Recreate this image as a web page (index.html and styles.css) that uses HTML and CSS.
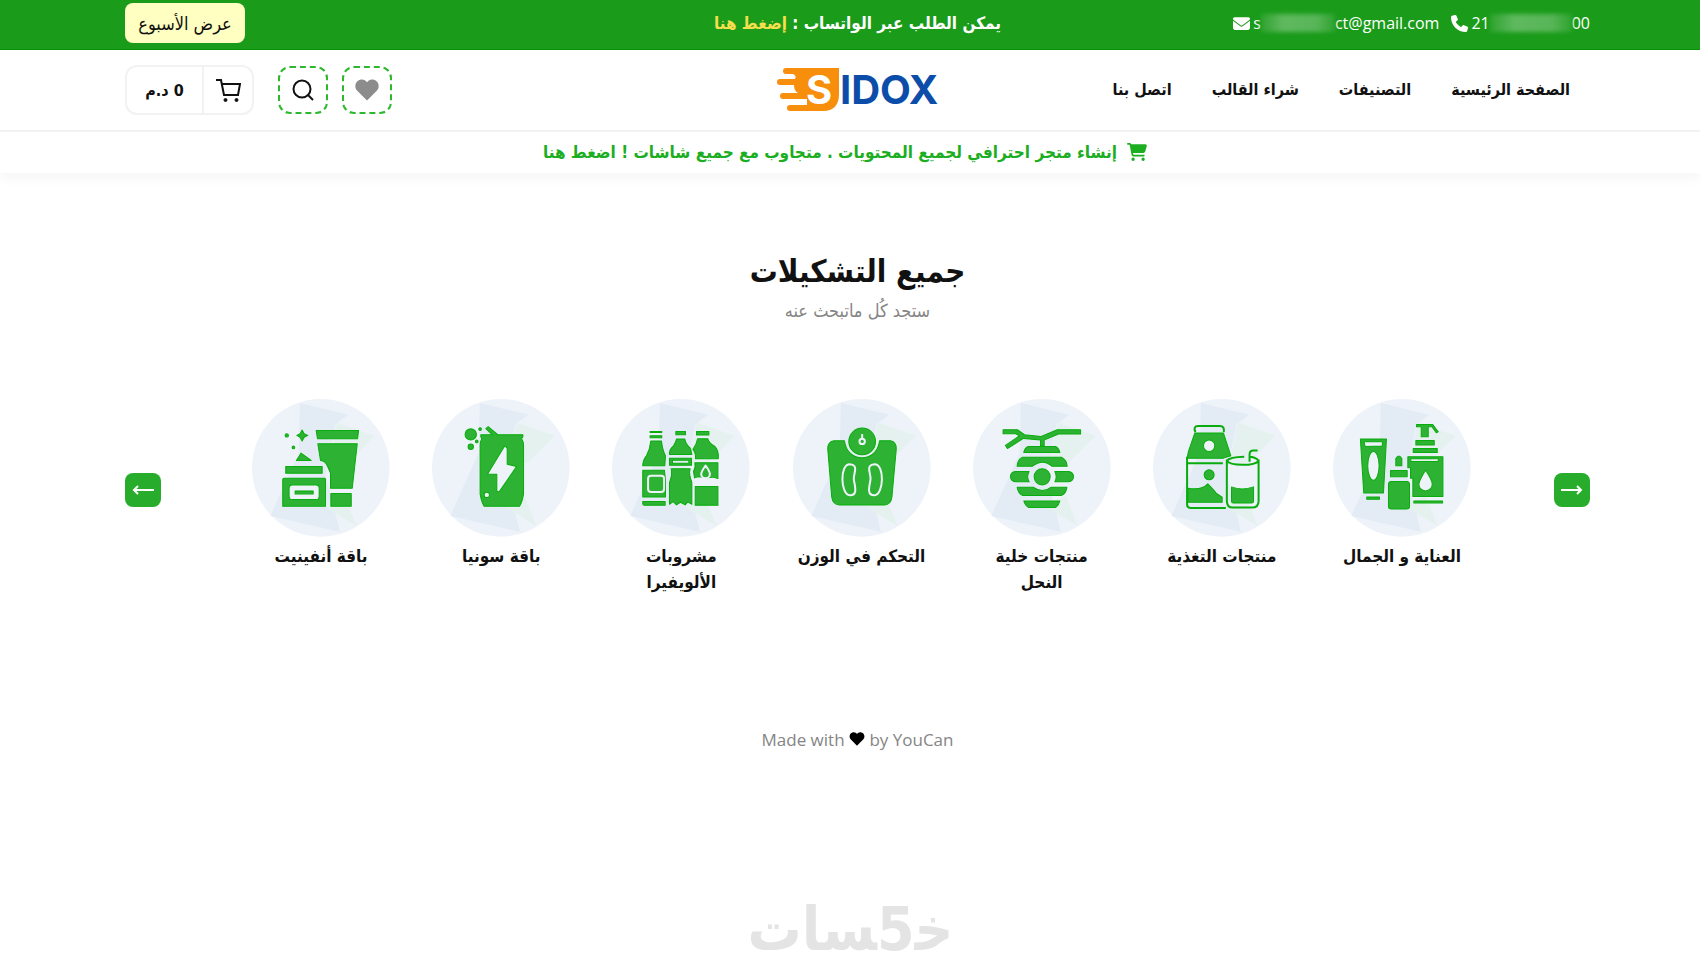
FILE: index.html
```html
<!DOCTYPE html>
<html lang="ar" dir="rtl">
<head>
<meta charset="utf-8">
<meta name="viewport" content="width=device-width, initial-scale=1">
<title>جميع التشكيلات</title>
<link rel="stylesheet" href="styles.css">
</head>
<body>
<div class="topbar">
  <div class="container three-cols">
    <div class="contacts">
      <a class="contact" dir="ltr" href="#phone">
        <svg class="contact-icon" viewBox="0 0 512 512" aria-hidden="true"><path d="M165 25c-8-19-29-29-48-24L29 25C11 30 0 46 0 64c0 247 201 448 448 448 18 0 34-12 39-29l24-88c5-20-5-41-24-49l-96-40c-17-7-36-2-47 12l-40 49c-71-33-127-90-161-160l49-40c14-12 19-31 12-47z"/></svg>
        <span>21</span><span class="smudge smudge-phone"></span><span>00</span>
      </a>
      <a class="contact" dir="ltr" href="#mail">
        <svg class="contact-icon" viewBox="0 0 512 420" aria-hidden="true"><path d="M48 18C22 18 0 40 0 66c0 15 7 29 19 38l218 163c11 9 27 9 38 0l218-163c12-9 19-23 19-38 0-26-22-48-48-48zM0 130v208c0 35 29 64 64 64h384c35 0 64-29 64-64V130L294 293c-23 17-53 17-76 0z"/></svg>
        <span>s</span><span class="smudge smudge-mail"></span><span>ct@gmail.com</span>
      </a>
    </div>
    <p class="topbar-note">يمكن الطلب عبر الواتساب : <a href="#whatsapp">إضغط هنا</a></p>
    <div class="end"><button class="deal" type="button">عرض الأسبوع</button></div>
  </div>
</div>

<header class="header">
  <div class="container three-cols">
    <nav class="nav">
      <a href="#home">الصفحة الرئيسية</a>
      <a href="#categories">التصنيفات</a>
      <a href="#buy">شراء القالب</a>
      <a href="#contact">اتصل بنا</a>
    </nav>
    <a class="logo" href="#home" dir="ltr" aria-label="SIDOX">
      <svg viewBox="0 0 162 44" aria-hidden="true">
        <path fill="#f78f0c" d="M9 0H62V26Q62 43 46 43H13a3 3 0 0 1 0-6H30V31H6a3 3 0 0 1 0-6H21Q17 23 17 17H3a3 3 0 0 1 0-6H18Q20 8 16 6H9a3 3 0 0 1 0-6Z"/>
        <text class="logo-s" x="29" y="36">S</text>
        <text class="logo-word" x="63" y="36">IDOX</text>
      </svg>
    </a>
    <div class="end actions">
      <button class="square" type="button" aria-label="المفضلة">
        <svg width="24" height="22" viewBox="0 0 24 22"><path fill="#8c8c8c" d="M12 21.500 2 11.500C-1 8 0 2 5 .7 8-.2 10.500 1 12 3.200 13.500 1 16-.2 19 .7 24 2 25 8 22 11.500Z"/></svg>
      </button>
      <button class="square" type="button" aria-label="بحث">
        <svg width="22" height="22" viewBox="0 0 22 22" fill="none" stroke="#111" stroke-width="2"><circle cx="10" cy="10" r="8.500"/><path d="m16 16 5 5"/></svg>
      </button>
      <button class="cart" type="button" aria-label="السلة">
        <span class="cart-icon"><svg width="25" height="25" viewBox="0 0 25 25" fill="none" stroke="#111" stroke-width="2"><path d="M0 2h5l3 15h14l2-11H6"/><circle cx="9.500" cy="22" r="1.500" fill="#111" stroke-width="1"/><circle cx="20.500" cy="22" r="1.500" fill="#111" stroke-width="1"/></svg></span>
        <span class="cart-total">0 د.م</span>
      </button>
    </div>
  </div>
</header>

<div class="announce">
  <a href="#store">
    <svg width="20" height="18" viewBox="0 0 576 512" aria-hidden="true"><path d="M0 24C0 11 11 0 24 0h46c22 0 41 13 50 32h411c26 0 45 25 38 50l-41 152c-9 32-38 54-71 54H171l5 28c3 12 13 20 24 20h288a24 24 0 0 1 0 48H200c-35 0-65-25-71-59L77 54c0-4-4-6-7-6H24C11 48 0 37 0 24zm128 440a48 48 0 1 1 96 0 48 48 0 0 1-96 0zm336-48a48 48 0 1 1 0 96 48 48 0 0 1 0-96z"/></svg>
    <span>إنشاء متجر احترافي لجميع المحتويات . متجاوب مع جميع شاشات ! اضغط هنا</span>
  </a>
</div>

<main class="container main">
  <h1>جميع التشكيلات</h1>
  <p class="subtitle">ستجد كُل ماتبحث عنه</p>

  <svg class="defs" aria-hidden="true">
    <symbol id="disc" viewBox="0 0 413 413">
      <circle cx="206" cy="206" r="206" fill="#eef3fa"/>
      <path fill="#e3ebf5" d="M143 12 288 47 250 75 220 225 263 397 55 350 140 160Z"/>
      <path fill="#e5f1ee" d="m254 70 112 40-78 80-60 10ZM205 315l108 65-35-88Z"/>
    </symbol>
  </svg>

  <section class="slider">
    <button class="arrow" type="button" aria-label="التالي"><svg width="22" height="10" viewBox="0 0 22 10"><path d="M0 5h20M16 1l4 4-4 4"/></svg></button>
    <div class="items">
      <a class="item" href="#c1">
        <svg class="picture" viewBox="67 25 413 413"><use href="#disc" x="67" y="25" width="413" height="413"/>
          <g class="ink">
            <path fill-rule="evenodd" d="M149 145h78l-9 161h-59ZM160 153l3 14 51-1 2-13Z"/><ellipse class="pale" cx="188" cy="225" rx="17" ry="43"/>
            <path d="M168 318h38v7h-38ZM255 225v-22q9-15 18 0v22ZM239 239h50v19h-50ZM241 272h47q8 0 8 9v65q0 8-8 8h-47q-8 0-8-8v-65q0-9 8-9Z"/>
            <path d="M317 101h48l17 22-6 3-13-18h-11v30h-21v-30h-14ZM315 149h55v14h-55ZM307 173h72v12h-72Z"/>
            <path fill-rule="evenodd" d="M291 198h105v119h-90v-55h-7v-31h-8ZM300 204v8h78q5 0 5-8Z"/><path d="M309 330h86v6h-86Z"/>
            <path class="pale" d="M344 238q-20 32-20 42a20 20 0 0 0 40 0q0-12-20-42Z"/>
          </g></svg>
        <span>العناية و الجمال</span>
      </a>
      <a class="item" href="#c2">
        <svg class="picture" viewBox="575 25 413 413"><use href="#disc" x="575" y="25" width="413" height="413"/>
          <g class="ink">
            <path d="M700 127h86l22 68-22 7H677l4-20Z"/><circle class="pale" cx="743" cy="165" r="17"/>
            <path class="line" d="M702 124q-8-18 8-18h65q15 0 12 18M677 198v143q0 10 10 10h106M680 217h104"/>
            <circle cx="743" cy="252" r="15"/>
            <path d="M680 292q41 7 59-13 20 20 25 28l18 12v15H680ZM810 288q31 12 66 0v43q0 5-6 5h-55q-5 0-5-5Z"/>
            <path class="line" d="M796 206v124q0 20 18 20h57q20 0 20-20V206M796 210q8 12 47 12t48-12q-7-10-25-12M796 210q8-11 52-12M864 213v-22q0-12 11-12h13"/>
          </g></svg>
        <span>منتجات التغذية</span>
      </a>
      <a class="item" href="#c3">
        <svg class="picture" viewBox="39 25 413 413"><use href="#disc" x="39" y="25" width="413" height="413"/>
          <g class="ink">
            <path d="M129 117h43l21 15 50 5 48-20h70v13h-66l-43 18v18h-11v-18l-51-5-48 30-6-9 42-29-11-6h-38Z"/>
            <path d="M204 167h82q10 5 13 18H191q2-13 13-18ZM187 199h117q15 8 17 27h-46q-27-24-58 0h-46q1-20 16-27ZM166 242h41q-9 16 0 31h-41q-14-2-15-16 1-13 15-15ZM284 242h41q14 2 15 15-1 14-15 16h-41q8-15 0-31ZM171 289h48q29 20 54 0h47q-2 20-17 25H188q-14-6-17-25ZM191 330h108q-3 13-13 20h-80q-11-6-15-20Z"/>
            <circle cx="246" cy="258" r="24"/>
          </g></svg>
        <span>منتجات خلية النحل</span>
      </a>
      <a class="item" href="#c4">
        <svg class="picture" viewBox="577 25 413 413"><use href="#disc" x="577" y="25" width="413" height="413"/>
          <g class="ink">
            <path d="M699 150h32c8 68 97 68 105 0h33q18 4 17 25l-13 144q-3 22-22 23H716q-20-1-23-23l-12-144q-1-21 18-25Z"/>
            <circle cx="784" cy="152" r="40"/>
            <path class="white-line" d="M784 130v14"/><circle class="white-line" cx="784" cy="152" r="8"/>
            <path class="white-line" d="M747 220c-31 0-28 91 0 93 25 1 15-28 12-47-2-18 17-43-12-46ZM821 220c31 0 28 91 0 93-25 1-15-28-12-47 2-18-17-43 12-46Z"/>
          </g></svg>
        <span>التحكم في الوزن</span>
      </a>
      <a class="item" href="#c5">
        <svg class="picture" viewBox="35 25 413 413"><use href="#disc" x="35" y="25" width="413" height="413"/>
          <g class="ink">
            <path d="M149 122h35v3h-35ZM149 135h35v6h-35ZM151 151h32q4 30 12 44l-2 30h-66q0-17 11-30 11-20 13-44ZM127 238h65l3 31v49h-68ZM127 332h67v11h-62q-5 0-5-5Z"/>
            <rect class="white-line" x="143" y="255" width="48" height="48" rx="9"/>
            <path d="M226 122h29v10h-29ZM228 145h25q3 16 17 28l4 18h-67q-1-16 12-26 7-10 9-20Z"/>
            <path fill-rule="evenodd" d="M207 202h66v21h-66ZM216 208v9h49v-9Z"/>
            <path d="M212 234h57q-5 14 5 41v65l-12-7-8 9-14-8-12 8-10-10-11 8v-64q10-29 5-42Z"/>
            <path d="M288 122h37v11h-37ZM291 144h31q3 13 20 22 14 14 11 38h-68q1-18-8-28 12-17 14-32ZM283 216h69v47q-23-6-35-1-16-7-35 0l-3-20q7-12 4-26ZM284 287h68v56h-68Z"/>
            <path class="white-line" d="M315 224q-13 19-13 26a13 12 0 0 0 26 0q0-8-13-26ZM281 267q15-9 34 4 19-14 37-1"/>
          </g></svg>
        <span>مشروبات الألويفيرا</span>
      </a>
      <a class="item" href="#c6">
        <svg class="picture" viewBox="579 25 413 413"><use href="#disc" x="579" y="25" width="413" height="413"/>
          <g class="ink">
            <path d="M725 132h35l-20-18 7-6 29 24h75v6l-4 6q6 8 6 20v145q-4 25-12 37H735q-8-12-12-37V164q0-12 5-20l-3-6Z"/>
            <path class="pale" d="m795 168-50 82h28v50q5 5 9 0l50-73-28-7v-47q-4-8-9-5Z"/>
            <circle class="pale" cx="743" cy="312" r="8"/>
            <circle cx="695" cy="131" r="17"/><circle cx="695" cy="168" r="8"/><circle cx="723" cy="115" r="4"/><circle cx="713" cy="152" r="4"/>
          </g></svg>
        <span>باقة سونيا</span>
      </a>
      <a class="item" href="#c7">
        <svg class="picture" viewBox="37 25 413 413"><use href="#disc" x="37" y="25" width="413" height="413"/>
          <g class="ink">
            <path d="M229 119h127l-3 25H233ZM234 159h118l-15 133h-65v-45q-5-12-10-23-5-13-20-15ZM273 308h61v38h-61Z"/>
            <path d="m170 209 14-22 30 22ZM138 227h109v20H138ZM133 262h121q3 0 3 4v80H129v-80q0-4 4-4Z"/>
            <rect class="pale" x="148" y="282" width="90" height="44" rx="10"/><path d="M166 300h54v9h-54Z"/>
            <path d="m187 118 6 11 11 5-11 6-6 11-6-11-10-6 10-5Z"/><circle cx="141" cy="134" r="5"/><circle cx="161" cy="170" r="4"/>
          </g></svg>
        <span>باقة أنفينيت</span>
      </a>
    </div>
    <button class="arrow" type="button" aria-label="السابق"><svg width="22" height="10" viewBox="0 0 22 10"><path d="M22 5H2M6 1 2 5l4 4"/></svg></button>
  </section>
</main>

<footer class="container footer">
  <p dir="ltr">Made with <svg width="16" height="14" viewBox="0 0 24 22" role="img" aria-label="love"><path d="M12 21.500 2 11.500C-1 8 0 2 5 .7 8-.2 10.500 1 12 3.200 13.500 1 16-.2 19 .7 24 2 25 8 22 11.500Z"/></svg> by YouCan</p>
  <div class="watermark">خ&zwj;5&zwj;سات</div>
</footer>
</body>
</html>
```
FILE: styles.css
```css
* { box-sizing: border-box; }
body {
  margin: 0;
  background: #fff;
  color: #111;
  font-family: "DejaVu Sans Condensed", "DejaVu Sans", sans-serif;
  font-size: 17px;
}
a { color: inherit; text-decoration: none; }
p, h1 { margin: 0; }
button { font: inherit; color: #111; cursor: pointer; padding: 0; }
svg { display: block; }
.container { padding: 0 110px 0 125px; }
.three-cols {
  display: grid;
  grid-template-columns: 1fr auto 1fr;
  align-items: center;
}
.end { justify-self: end; }

.topbar { background: #1a9b1a; border-bottom: 1px solid #078f07; color: #fff; padding: 3px 0 6px; }
.contacts { display: flex; gap: 12px; }
.contact {
  display: flex;
  align-items: center;
  font-family: "Open Sans", sans-serif;
  font-size: 16px;
  font-weight: 500;
  line-height: 24px;
}
.contact-icon { width: 17px; height: 17px; margin-right: 3px; fill: #fff; }
.smudge {
  height: 18px;
  background: linear-gradient(90deg, #2ea32e, #5fb95f 30%, #58b558 75%, #2ea32e);
  filter: blur(2px);
}
.smudge-phone { width: 82px; }
.smudge-mail { width: 74px; }
.topbar-note { font-size: 17px; font-weight: 700; line-height: 24px; }
.topbar-note a { color: #f5df4d; }
.deal {
  width: 120px;
  height: 40px;
  border: 0;
  border-radius: 8px;
  background: #ffffc2;
  font-size: 18px;
}

.header { border-bottom: 2px solid #f2f2f2; padding: 15px 0; }
.nav { display: flex; font-size: 16px; font-weight: 700; white-space: nowrap; }
.nav a { padding: 0 20px; line-height: 24px; }
.logo svg { width: 162px; height: 44px; overflow: visible; }
.logo-s { font: 700 40px "Inter", sans-serif; fill: #fff; }
.logo-word { font: 700 40px "Inter", sans-serif; fill: #0b4da8; }
.actions { display: flex; align-items: center; }
.square {
  display: grid;
  place-items: center;
  width: 50px;
  height: 48px;
  margin-left: 14px;
  border: 2px dashed #2eb82e;
  border-radius: 12px;
  background: #fff;
}
.square + .square { margin-left: 24px; }
.cart {
  display: flex;
  align-items: stretch;
  height: 50px;
  border: 2px solid #f2f2f2;
  border-radius: 12px;
  background: #fff;
  font-size: 16px;
  font-weight: 700;
}
.cart-icon { display: grid; place-items: center; width: 50px; border-left: 2px solid #f2f2f2; }
.cart-total { display: grid; place-items: center; width: 75px; }

.announce {
  display: flex;
  justify-content: center;
  padding: 8px 10px 9px 0;
  box-shadow: 0 8px 8px #f9f9f9;
  color: #1cae22;
  font-size: 17px;
  font-weight: 700;
  line-height: 24px;
}
.announce a { display: flex; align-items: center; gap: 10px; }
.announce svg { fill: currentColor; }

.main { padding-top: 74px; text-align: center; }
h1 { font-size: 31px; line-height: 48px; }
.subtitle { color: #858585; font-size: 18px; line-height: 28px; margin-top: 2px; }
.defs { width: 0; height: 0; position: absolute; }
.slider { display: flex; align-items: flex-start; margin-top: 74px; }
.arrow {
  display: grid;
  place-items: center;
  flex: none;
  width: 36px;
  height: 34px;
  margin-top: 74px;
  border: 0;
  border-radius: 8px;
  background: #27ad2b;
}
.arrow path { fill: none; stroke: #fff; stroke-width: 2; }
.items {
  display: grid;
  grid-template-columns: repeat(7, 1fr);
  flex: 1;
  margin: 0 62px 0 70px;
}
.item { display: flex; flex-direction: column; align-items: center; font-weight: 700; line-height: 26px; }
.item span { max-width: 132px; margin-top: 6px; }
.picture { width: 138px; height: 138px; }
.ink { fill: #2db233; stroke: #08ac0c; stroke-width: 3; stroke-linejoin: round; }
.ink .pale { fill: #eef3fa; }
.ink .line { fill: none; stroke-width: 6; }
.ink .white-line { fill: none; stroke: #eef3fa; stroke-width: 6; }

.footer { display: flex; flex-direction: column; align-items: center; margin-top: 132px; }
.footer p { color: #858585; font: 17px/26px "Open Sans", sans-serif; }
.footer svg { display: inline-block; fill: #000; }
.watermark { margin-top: 144px; padding-right: 14px; color: #e4e4e4; font-size: 60px; font-weight: 700; line-height: 64px; }
```
